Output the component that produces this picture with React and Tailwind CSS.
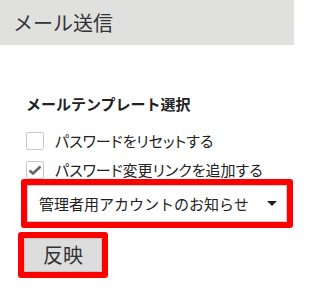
export default function App() {
  return (
    <div className="w-[294px] h-[305px] bg-white text-[#222] font-['Noto_Sans_CJK_JP',sans-serif] overflow-hidden">
      <div className="h-[45px] bg-[#e0e0de] pl-[13px] flex items-center text-[20px] text-[#333]">
        メール送信
      </div>

      <div className="mt-[49px] ml-[26px] text-[15px] leading-[20px] font-bold">
        メールテンプレート選択
      </div>

      <div className="mt-[18px] ml-[26px] flex flex-col gap-[11px]">
        <label className="h-[18px] flex items-center">
          <span className="w-[18px] h-[18px] border border-[#c8c8c8] rounded-[2px] bg-white"></span>
          <span className="ml-[11px] text-[15px] leading-[20px] [font-feature-settings:'palt']">
            パスワードをリセットする
          </span>
        </label>
        <label className="h-[18px] flex items-center">
          <span className="w-[18px] h-[18px] border border-[#c8c8c8] rounded-[2px] bg-white flex items-center justify-center">
            <svg width="14" height="10" viewBox="0 0 14 10">
              <path d="M1.5 5.5 L5 8.5 L12.5 1.5" fill="none" stroke="#666" strokeWidth="2.6" />
            </svg>
          </span>
          <span className="ml-[11px] text-[15px] leading-[20px] [font-feature-settings:'palt']">
            パスワード変更リンクを追加する
          </span>
        </label>
      </div>

      <div className="ml-[21px] w-[272px] h-[49px] border-[6px] border-[#ff0000] rounded-[3px]">
        <div className="h-full bg-white border border-[#cccccc] flex items-center justify-between pl-[11px] pr-[9px]">
          <span className="text-[15px] leading-[20px]">管理者用アカウントのお知らせ</span>
          <svg width="10" height="5" viewBox="0 0 10 5">
            <path d="M0 0 L10 0 L5 5 Z" fill="#222" />
          </svg>
        </div>
      </div>

      <div className="mt-[4px] ml-[18px] w-[90px] h-[46px] border-[6px] border-[#ff0000] rounded-[3px]">
        <button className="w-full h-full bg-[#dddddd] border border-[#c4c4c4] flex items-center justify-center text-[20px] text-[#333]">
          反映
        </button>
      </div>
    </div>
  );
}
